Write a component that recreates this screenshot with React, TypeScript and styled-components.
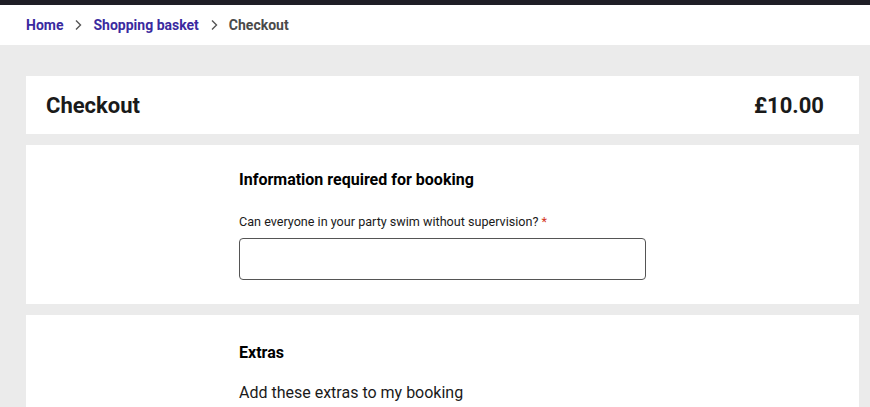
import React from "react";
import styled, { createGlobalStyle } from "styled-components";

const Global = createGlobalStyle`
  html, body { margin: 0; padding: 0; }
  body { font-family: Roboto, "Noto Sans", sans-serif; background: #ebebeb; color: #1a1a1a; }
  * { box-sizing: border-box; }
`;

const TopBar = styled.div`
  height: 5px;
  background: #1f1e26;
`;

const Crumbs = styled.nav`
  height: 40px;
  background: #ffffff;
  display: flex;
  align-items: center;
  padding-left: 26px;
  gap: 9px;
  font-size: 14px;
  font-weight: 700;
`;

const CrumbLink = styled.a`
  color: #3a2aa0;
  text-decoration: none;
`;

const CrumbCurrent = styled.span`
  color: #4a4a4a;
`;

const Chevron = styled.svg`
  width: 12px;
  height: 12px;
  color: #555;
`;

const Main = styled.main`
  padding: 31px 11px 0 26px;
  display: flex;
  flex-direction: column;
  gap: 11px;
`;

const HeaderCard = styled.section`
  background: #fff;
  height: 58px;
  display: flex;
  align-items: center;
  justify-content: space-between;
  padding: 0 35px 0 20px;
`;

const Title = styled.h1`
  margin: 0;
  font-size: 22px;
  font-weight: 700;
  color: #1a1a1a;
`;

const Price = styled.div`
  font-size: 22px;
  font-weight: 700;
  color: #1a1a1a;
`;

const Card = styled.section<{ $top?: number; $h?: number }>`
  background: #fff;
  padding: ${(p) => p.$top ?? 25}px 213px 24px 213px;
  ${(p) => (p.$h ? `min-height: ${p.$h}px;` : "")}
`;

const SectionTitle = styled.h2`
  margin: 0;
  font-size: 16px;
  font-weight: 700;
  line-height: 20px;
  color: #000;
`;

const Label = styled.label`
  display: block;
  margin-top: 24px;
  font-size: 12.6px;
  line-height: 16px;
  color: #1a1a1a;
`;

const Req = styled.span`
  color: #d4351c;
`;

const Input = styled.input`
  display: block;
  margin-top: 8px;
  width: 407px;
  height: 42px;
  border: 1px solid #555;
  border-radius: 4px;
  background: #fff;
  font-family: inherit;
  font-size: 14px;
  padding: 0 10px;
`;

const Body = styled.p`
  margin: 20px 0 0;
  font-size: 16px;
  line-height: 20px;
  color: #1a1a1a;
`;

const Chev = () => (
  <Chevron viewBox="0 0 12 12" fill="none">
    <path d="M4 1.5 L8.5 6 L4 10.5" stroke="currentColor" strokeWidth="1.4" />
  </Chevron>
);

export default function App() {
  return (
    <>
      <Global />
      <TopBar />
      <Crumbs>
        <CrumbLink href="#">Home</CrumbLink>
        <Chev />
        <CrumbLink href="#">Shopping basket</CrumbLink>
        <Chev />
        <CrumbCurrent>Checkout</CrumbCurrent>
      </Crumbs>
      <Main>
        <HeaderCard>
          <Title>Checkout</Title>
          <Price>£10.00</Price>
        </HeaderCard>
        <Card>
          <SectionTitle>Information required for booking</SectionTitle>
          <Label>
            Can everyone in your party swim without supervision? <Req>*</Req>
          </Label>
          <Input />
        </Card>
        <Card $top={28} $h={200}>
          <SectionTitle>Extras</SectionTitle>
          <Body>Add these extras to my booking</Body>
        </Card>
      </Main>
    </>
  );
}
